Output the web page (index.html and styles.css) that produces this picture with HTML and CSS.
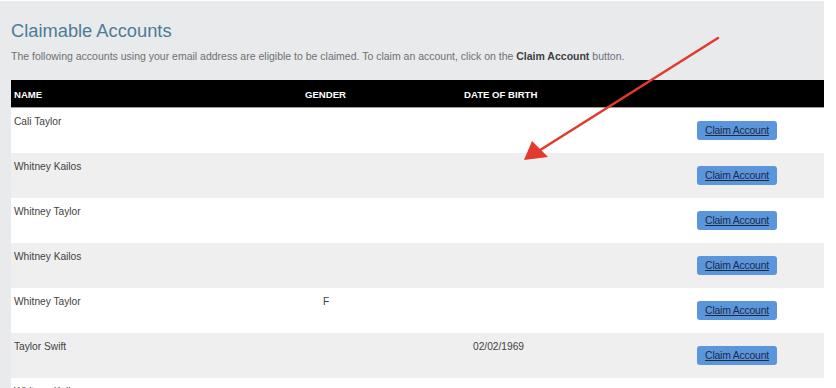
FILE: index.html
```html
<!DOCTYPE html>
<html lang="en">
<head>
<meta charset="utf-8">
<title>Claimable Accounts</title>
<link rel="stylesheet" href="styles.css">
</head>
<body>
<main class="panel">
  <h1 class="title">Claimable Accounts</h1>
  <p class="intro">The following accounts using your email address are eligible to be claimed. To claim an account, click on the <b>Claim Account</b> button.</p>
  <div class="table">
    <div class="row head">
      <div class="cell">NAME</div>
      <div class="cell">GENDER</div>
      <div class="cell">DATE OF BIRTH</div>
      <div class="cell"></div>
    </div>
    <div class="row">
      <div class="cell">Cali Taylor</div>
      <div class="cell gender"></div>
      <div class="cell dob"></div>
      <div class="cell action"><a class="claim" href="#">Claim Account</a></div>
    </div>
    <div class="row alt">
      <div class="cell">Whitney Kailos</div>
      <div class="cell gender"></div>
      <div class="cell dob"></div>
      <div class="cell action"><a class="claim" href="#">Claim Account</a></div>
    </div>
    <div class="row">
      <div class="cell">Whitney Taylor</div>
      <div class="cell gender"></div>
      <div class="cell dob"></div>
      <div class="cell action"><a class="claim" href="#">Claim Account</a></div>
    </div>
    <div class="row alt">
      <div class="cell">Whitney Kailos</div>
      <div class="cell gender"></div>
      <div class="cell dob"></div>
      <div class="cell action"><a class="claim" href="#">Claim Account</a></div>
    </div>
    <div class="row">
      <div class="cell">Whitney Taylor</div>
      <div class="cell gender">F</div>
      <div class="cell dob"></div>
      <div class="cell action"><a class="claim" href="#">Claim Account</a></div>
    </div>
    <div class="row alt">
      <div class="cell">Taylor Swift</div>
      <div class="cell gender"></div>
      <div class="cell dob">02/02/1969</div>
      <div class="cell action"><a class="claim" href="#">Claim Account</a></div>
    </div>
    <div class="row">
      <div class="cell">Whitney Kailos</div>
      <div class="cell gender"></div>
      <div class="cell dob"></div>
      <div class="cell action"><a class="claim" href="#">Claim Account</a></div>
    </div>
  </div>
</main>
<svg class="pointer" width="836" height="388" viewBox="0 0 836 388" aria-hidden="true">
  <line x1="718" y1="38" x2="537" y2="152" stroke="#e4392d" stroke-width="2.6" stroke-linecap="round"/>
  <polygon points="524,160 532,141 548,157" fill="#e4392d"/>
</svg>
</body>
</html>
```

FILE: styles.css
```css
html, body {
  margin: 0;
  padding: 0;
  background: #ffffff;
  overflow: hidden;
}

body {
  position: relative;
  width: 836px;
  height: 388px;
  font-family: "Liberation Sans", Arial, sans-serif;
}

.panel {
  width: 813px;
  margin-top: 1px;
  padding: 0 0 0 11px;
  background: #e9eaec;
  height: 387px;
  overflow: hidden;
}

.title {
  margin: 0;
  padding-top: 19px;
  font-size: 18.3px;
  font-weight: normal;
  color: #4b7c99;
  line-height: 22px;
}

.intro {
  margin: 8px 0 0;
  font-size: 10.5px;
  line-height: 12px;
  color: #6d7073;
}

.intro b {
  color: #3d4043;
}

.table {
  margin-top: 18px;
  width: 813px;
}

.row {
  display: grid;
  grid-template-columns: 291px 159px 236px 1fr;
  height: 45px;
  background: #ffffff;
}

.row.alt {
  background: #efefef;
}

.row.head {
  height: 27px;
  background: #000000;
  border-bottom: 1px solid #9a9a9a;
  width: 814px;
}

.head .cell {
  color: #ffffff;
  font-weight: bold;
  font-size: 9.6px;
  padding-top: 9px;
  text-transform: uppercase;
}

.cell {
  padding: 8px 0 0 3px;
  font-size: 10.2px;
  line-height: 12px;
  color: #3f4245;
}

.cell.gender {
  padding-left: 21px;
}

.cell.dob {
  padding-left: 12px;
}

.cell.action {
  padding: 13px 0 0 0;
}

.claim {
  display: inline-block;
  box-sizing: border-box;
  width: 80px;
  height: 19px;
  line-height: 19px;
  text-align: center;
  background: #5b95dc;
  border-radius: 3px;
  color: #1b2a45;
  font-size: 10.4px;
  letter-spacing: -0.2px;
  white-space: nowrap;
  text-decoration: underline;
}

.pointer {
  position: absolute;
  left: 0;
  top: 0;
  pointer-events: none;
}
```
